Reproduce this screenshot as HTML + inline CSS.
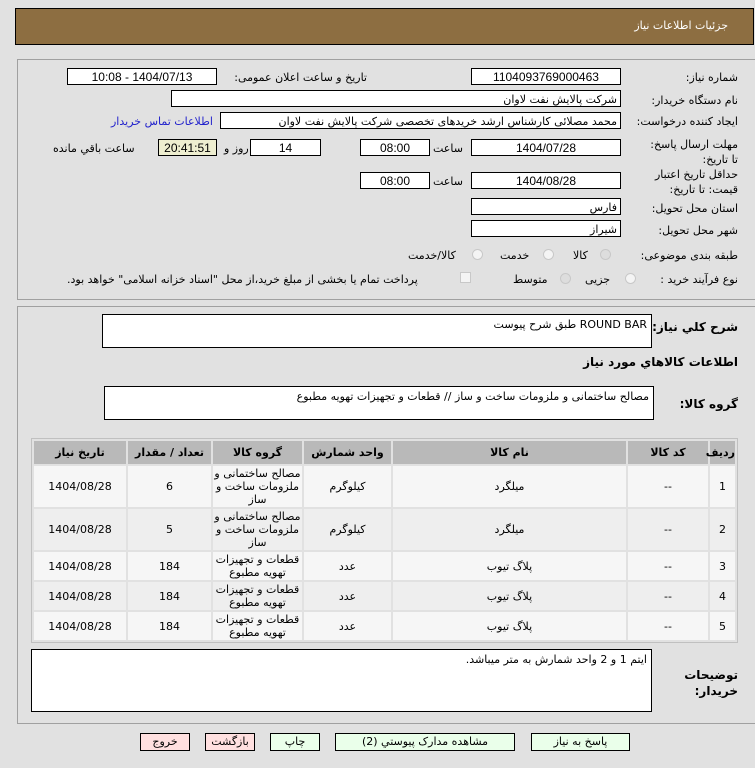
<!DOCTYPE html>
<html><head><meta charset="utf-8"><style>
body{margin:0;width:755px;height:768px;background:#e1e1e1;font-family:"DejaVu Sans","Liberation Sans",sans-serif;font-size:11px;color:#000;position:relative;overflow:hidden;direction:rtl}
.a{position:absolute;white-space:nowrap}
.hdr{left:15px;top:8px;width:737px;height:35px;background:#8d6e41;border:1px solid #000}
.pnl{border-top:1px solid #a0a0a0;border-left:1px solid #a0a0a0;border-bottom:1px solid #a0a0a0}
.in{position:absolute;background:#fff;border:1px solid #000;height:17px;line-height:17px;box-sizing:border-box;text-align:center;font-size:12px;font-family:"Liberation Sans","DejaVu Sans",sans-serif}
.inr{text-align:right;padding-right:3px;font-family:"DejaVu Sans",sans-serif;font-size:11px}
.lb{position:absolute;right:17px;text-align:right}
.b{font-weight:bold}
.rad{position:absolute;width:11px;height:11px;border-radius:50%;border:1px solid #c8c8c8;background:#f4f4f4;box-sizing:border-box}
.ta{position:absolute;background:#fff;border:1px solid #000;box-sizing:border-box;padding:3px 4px;text-align:right}
table{position:absolute;left:31px;top:438px;width:707px;table-layout:fixed;border-collapse:separate;border-spacing:2px;border:1px solid #c0c0c0;background:#e1e1e1}
td{text-align:center;font-size:11px;padding:0 1px;line-height:13px;overflow:hidden}
th{background:#b9b9b9;height:23px;font-size:11px;padding:0}
tr.o td{background:#f6f6f6}
tr.e td{background:#eeeeee}
.btn{position:absolute;top:733px;height:18px;border:1px solid #000;box-sizing:border-box;text-align:center;line-height:16px;font-size:11px;background:#eaffea}
.pk{background:#ffe0e0}
</style></head><body>
<div class="a hdr"></div>
<div class="a" style="right:27px;top:19px;color:#fff;font-size:11px">جزئیات اطلاعات نیاز</div>

<div class="a pnl" style="left:17px;top:59px;width:740px;height:239px"></div>
<div class="lb" style="top:71px">شماره نیاز:</div>
<div class="in" style="left:471px;top:68px;width:150px">1104093769000463</div>
<div class="a" style="left:221px;top:71px;width:146px;text-align:right">تاریخ و ساعت اعلان عمومی:</div>
<div class="in" style="left:67px;top:68px;width:150px">1404/07/13 - 10:08</div>

<div class="lb" style="top:94px">نام دستگاه خریدار:</div>
<div class="in inr" style="left:171px;top:90px;width:450px">شرکت پالایش نفت لاوان</div>

<div class="lb" style="top:115px">ایجاد کننده درخواست:</div>
<div class="in inr" style="left:220px;top:112px;width:401px">محمد مصلائی کارشناس ارشد خریدهای تخصصی شرکت پالایش نفت لاوان</div>
<div class="a" style="left:111px;top:115px;color:#2222cc">اطلاعات تماس خریدار</div>

<div class="lb" style="top:137px;width:95px;line-height:15px;white-space:normal">مهلت ارسال پاسخ: تا تاریخ:</div>
<div class="in" style="left:471px;top:139px;width:150px">1404/07/28</div>
<div class="a" style="left:433px;top:142px">ساعت</div>
<div class="in" style="left:360px;top:139px;width:70px">08:00</div>
<div class="in" style="left:250px;top:139px;width:71px">14</div>
<div class="a" style="left:224px;top:142px">روز و</div>
<div class="in" style="left:158px;top:139px;width:59px;background:#eeeed0">20:41:51</div>
<div class="a" style="left:53px;top:142px">ساعت باقي مانده</div>

<div class="lb" style="top:167px;width:95px;line-height:15px;white-space:normal">حداقل تاریخ اعتبار قیمت: تا تاریخ:</div>
<div class="in" style="left:471px;top:172px;width:150px">1404/08/28</div>
<div class="a" style="left:433px;top:175px">ساعت</div>
<div class="in" style="left:360px;top:172px;width:70px">08:00</div>

<div class="lb" style="top:202px">استان محل تحویل:</div>
<div class="in inr" style="left:471px;top:198px;width:150px">فارس</div>
<div class="lb" style="top:224px">شهر محل تحویل:</div>
<div class="in inr" style="left:471px;top:220px;width:150px">شیراز</div>

<div class="lb" style="top:249px">طبقه بندی موضوعی:</div>
<div class="rad" style="left:600px;top:249px;background:#ddd"></div><div class="a" style="left:573px;top:249px">کالا</div>
<div class="rad" style="left:543px;top:249px"></div><div class="a" style="left:500px;top:249px">خدمت</div>
<div class="rad" style="left:472px;top:249px"></div><div class="a" style="left:408px;top:249px">کالا/خدمت</div>

<div class="lb" style="top:273px">نوع فرآیند خرید :</div>
<div class="rad" style="left:625px;top:273px"></div><div class="a" style="left:585px;top:273px">جزیی</div>
<div class="rad" style="left:560px;top:273px;background:#ddd"></div><div class="a" style="left:513px;top:273px">متوسط</div>
<div class="a" style="left:460px;top:272px;width:11px;height:11px;border:1px solid #c8c8c8;background:#f4f4f4;box-sizing:border-box"></div>
<div class="a" style="left:67px;top:273px">پرداخت تمام یا بخشی از مبلغ خرید،از محل "اسناد خزانه اسلامی" خواهد بود.</div>

<div class="a pnl" style="left:17px;top:306px;width:740px;height:416px"></div>
<div class="lb b" style="top:320px;font-size:12px">شرح کلي نياز:</div>
<div class="ta" style="left:102px;top:314px;width:550px;height:34px">ROUND BAR طبق شرح پیوست</div>
<div class="lb b" style="top:355px;font-size:12px">اطلاعات کالاهاي مورد نياز</div>
<div class="lb b" style="top:397px;font-size:12px">گروه کالا:</div>
<div class="ta" style="left:104px;top:386px;width:550px;height:34px">مصالح ساختمانی و ملزومات ساخت و ساز //  قطعات و تجهیزات تهویه مطبوع</div>

<table>
<colgroup><col style="width:25px"><col style="width:80px"><col style="width:233px"><col style="width:87px"><col style="width:89px"><col style="width:83px"><col style="width:92px"></colgroup>
<tr><th>ردیف</th><th>کد کالا</th><th>نام کالا</th><th>واحد شمارش</th><th>گروه کالا</th><th>تعداد / مقدار</th><th>تاریخ نیاز</th></tr>
<tr class="o" style="height:41px"><td>1</td><td>--</td><td>میلگرد</td><td>کیلوگرم</td><td>مصالح ساختمانی و ملزومات ساخت و ساز</td><td>6</td><td>1404/08/28</td></tr>
<tr class="e" style="height:41px"><td>2</td><td>--</td><td>میلگرد</td><td>کیلوگرم</td><td>مصالح ساختمانی و ملزومات ساخت و ساز</td><td>5</td><td>1404/08/28</td></tr>
<tr class="o" style="height:28px"><td>3</td><td>--</td><td>پلاگ تیوب</td><td>عدد</td><td>قطعات و تجهیزات تهویه مطبوع</td><td>184</td><td>1404/08/28</td></tr>
<tr class="e" style="height:28px"><td>4</td><td>--</td><td>پلاگ تیوب</td><td>عدد</td><td>قطعات و تجهیزات تهویه مطبوع</td><td>184</td><td>1404/08/28</td></tr>
<tr class="o" style="height:28px"><td>5</td><td>--</td><td>پلاگ تیوب</td><td>عدد</td><td>قطعات و تجهیزات تهویه مطبوع</td><td>184</td><td>1404/08/28</td></tr>
</table>

<div class="lb b" style="top:667px;width:50px;line-height:16px;white-space:normal;font-size:12px">توضیحات خریدار:</div>
<div class="ta" style="left:31px;top:649px;width:621px;height:63px">ایتم 1 و 2 واحد شمارش به متر میباشد.</div>

<div class="btn" style="left:531px;width:99px">پاسخ به نیاز</div>
<div class="btn" style="left:335px;width:180px">مشاهده مدارک پیوستي (2)</div>
<div class="btn" style="left:270px;width:50px">چاپ</div>
<div class="btn pk" style="left:205px;width:50px">بازگشت</div>
<div class="btn pk" style="left:140px;width:50px">خروج</div>
</body></html>
